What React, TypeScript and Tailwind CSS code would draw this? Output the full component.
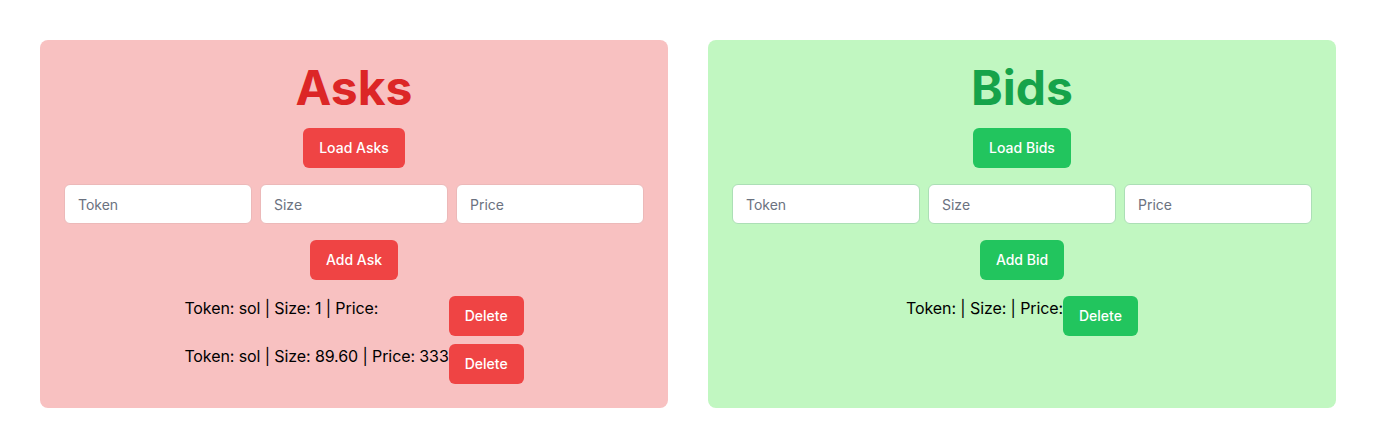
import { useState } from "react";

type Order = { token: string; size: string; price: string };

function Book({
  title,
  single,
  orders,
  tone,
}: {
  title: string;
  single: string;
  orders: Order[];
  tone: "red" | "green";
}) {
  const [token, setToken] = useState("");
  const [size, setSize] = useState("");
  const [price, setPrice] = useState("");

  const card = tone === "red" ? "bg-[#f8c1c1]" : "bg-[#c1f7c1]";
  const heading = tone === "red" ? "text-[#dc2626]" : "text-[#16a34a]";
  const btn = tone === "red" ? "bg-[#ef4444]" : "bg-[#22c55e]";
  const border = tone === "red" ? "border-[#ecb9b9]" : "border-[#acdfb6]";

  return (
    <div className={`${card} rounded-lg p-6 flex flex-col items-center`}>
      <h1 className={`${heading} text-5xl leading-[48px] font-bold`}>{title}</h1>

      <button className={`${btn} mt-4 text-white text-sm font-medium h-10 px-4 rounded-md`}>
        Load {title}
      </button>

      <div className="mt-4 grid grid-cols-3 gap-2 w-full">
        <input
          value={token}
          onChange={(e) => setToken(e.target.value)}
          placeholder="Token"
          className={`h-10 px-[13px] bg-white border ${border} rounded-md text-sm placeholder:text-[#6b7280]`}
        />
        <input
          value={size}
          onChange={(e) => setSize(e.target.value)}
          placeholder="Size"
          className={`h-10 px-[13px] bg-white border ${border} rounded-md text-sm placeholder:text-[#6b7280]`}
        />
        <input
          value={price}
          onChange={(e) => setPrice(e.target.value)}
          placeholder="Price"
          className={`h-10 px-[13px] bg-white border ${border} rounded-md text-sm placeholder:text-[#6b7280]`}
        />
      </div>

      <button className={`${btn} mt-4 text-white text-sm font-medium h-10 px-4 rounded-md`}>
        Add {single}
      </button>

      <div className="mt-4 grid grid-cols-[auto_auto] items-start gap-y-2">
        {orders.map((o, i) => (
          <div key={i} className="contents">
            <span className="text-base leading-6 text-black tracking-[-0.1px]">
              Token: {o.token} | Size: {o.size} | Price: {o.price}
            </span>
            <button className={`${btn} text-white text-sm font-medium h-10 px-4 rounded-md`}>
              Delete
            </button>
          </div>
        ))}
      </div>
    </div>
  );
}

export default function App() {
  return (
    <main className="bg-white p-10 grid grid-cols-2 gap-10 font-['Inter',sans-serif]">
      <Book
        title="Asks"
        single="Ask"
        tone="red"
        orders={[
          { token: "sol", size: "1", price: "" },
          { token: "sol", size: "89.60", price: "333" },
        ]}
      />
      <Book
        title="Bids"
        single="Bid"
        tone="green"
        orders={[{ token: "", size: "", price: "" }]}
      />
    </main>
  );
}
